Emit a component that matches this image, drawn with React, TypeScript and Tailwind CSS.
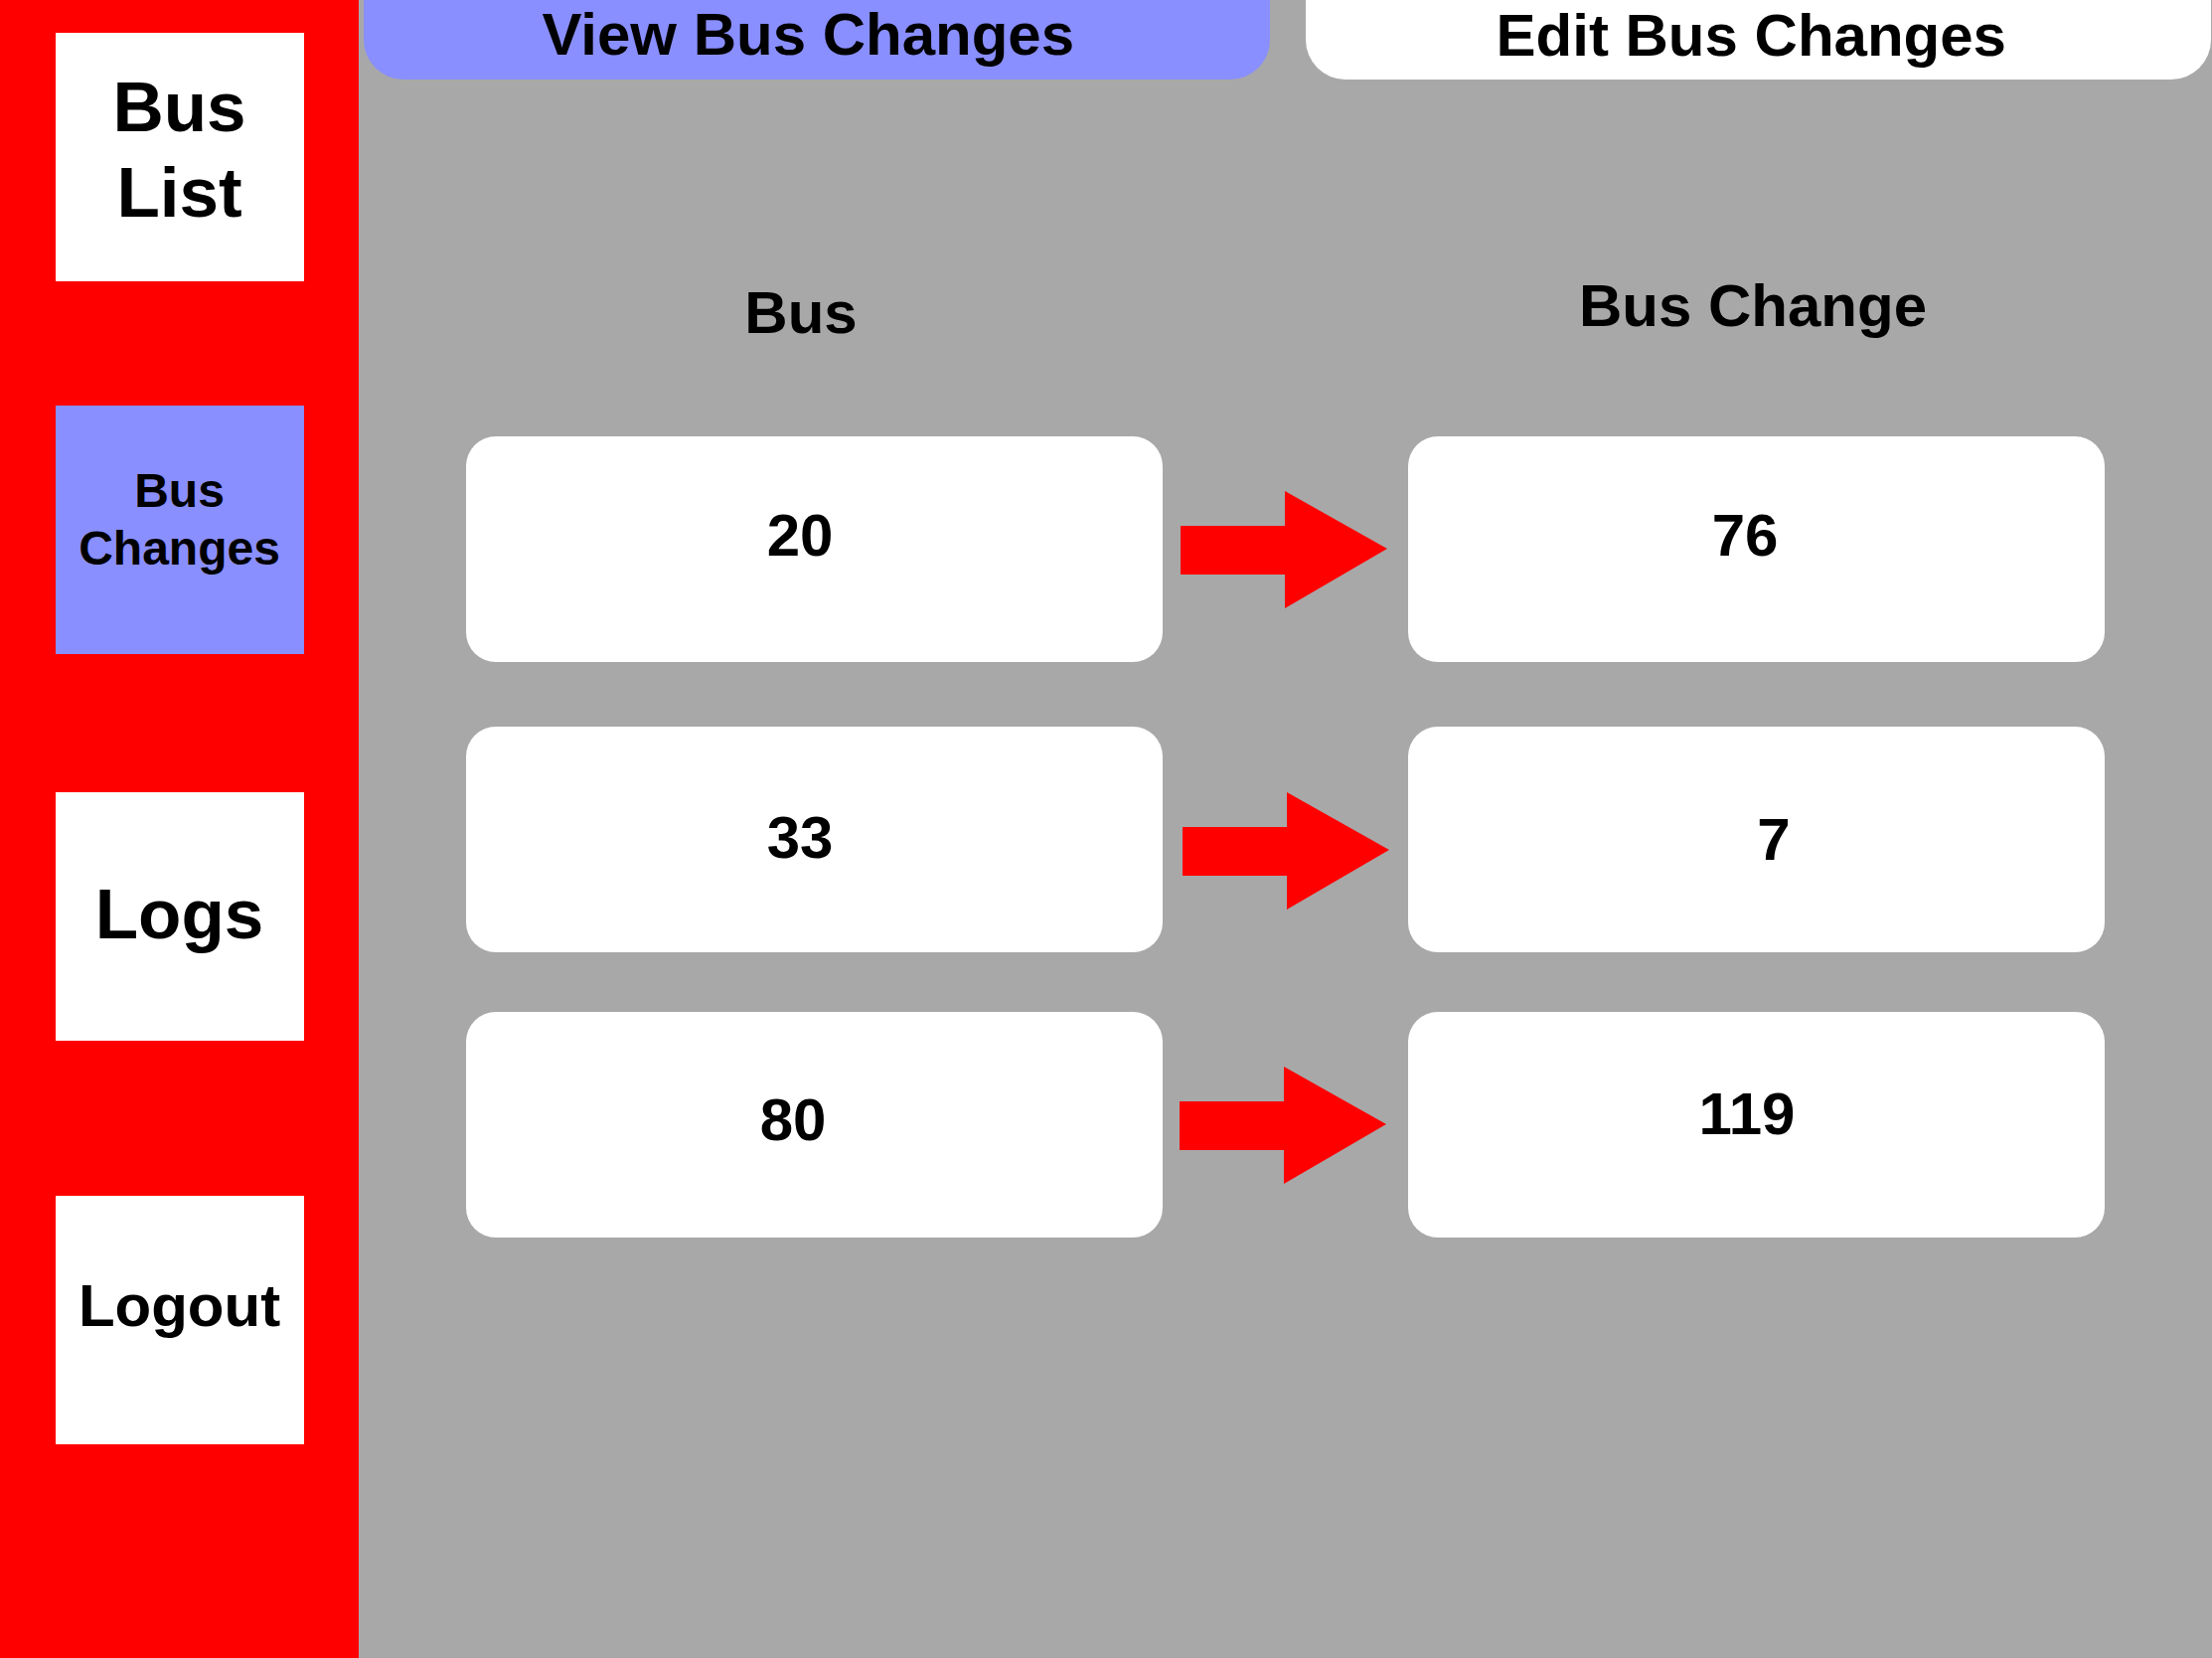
const font = { fontFamily: '"Liberation Sans", Arial, sans-serif' };

const navItems = [
  { label: ["Bus", "List"], box: "mt-[33px] bg-white", text: "text-[71px] leading-[86px] mb-[15px]" },
  { label: ["Bus", "Changes"], box: "mt-[125px] bg-[#8a8fff]", text: "text-[48px] leading-[58px] mb-[20px]" },
  { label: ["Logs"], box: "mt-[139px] bg-white", text: "text-[71px] leading-none mb-[6px]" },
  { label: ["Logout"], box: "mt-[156px] bg-white", text: "text-[60px] leading-none mb-[28px]" },
];

const rows = [
  {
    bus: "20",
    change: "76",
    row: "mt-0",
    busText: "mr-[29px] mb-[28px]",
    changeText: "mr-[23px] mb-[28px]",
    arrow: "pl-[18px]",
  },
  {
    bus: "33",
    change: "7",
    row: "mt-[65px]",
    busText: "mr-[29px] mb-[4px]",
    changeText: "ml-[35px]",
    arrow: "pl-[20px] mt-[22px]",
  },
  {
    bus: "80",
    change: "119",
    row: "mt-[60px]",
    busText: "mr-[43px] mb-[9px]",
    changeText: "mr-[19px] mb-[21px]",
    arrow: "pl-[17px]",
  },
];

const Arrow = () => (
  <svg width="208" height="118" viewBox="0 0 208 118" aria-hidden="true">
    <polygon points="0,35 105,35 105,0 208,58 105,118 105,84 0,84" fill="#ff0000" />
  </svg>
);

const Sidebar = () => (
  <aside className="flex h-full w-[361px] shrink-0 flex-col items-center bg-[#ff0000]">
    {navItems.map((item) => (
      <div
        key={item.label.join(" ")}
        className={`flex h-[250px] w-[250px] shrink-0 items-center justify-center ${item.box}`}
      >
        <div className={`text-center font-bold text-black ${item.text}`}>
          {item.label.map((line) => (
            <div key={line}>{line}</div>
          ))}
        </div>
      </div>
    ))}
  </aside>
);

const App = () => {
  return (
    <div className="flex h-[1668px] w-full overflow-hidden" style={font}>
      <Sidebar />

      <main className="flex flex-1 flex-col bg-[#a8a8a8]">
        <div className="flex gap-[36px] pl-[5px] pr-[1px]">
          <div className="flex h-[80px] flex-1 items-center justify-center rounded-b-[40px] bg-[#8a8fff]">
            <span className="mr-[17px] mb-[10px] text-[60px] leading-none font-bold text-black">
              View Bus Changes
            </span>
          </div>
          <div className="flex h-[80px] flex-1 items-center justify-center rounded-b-[40px] bg-white">
            <span className="mr-[14px] mb-[8px] text-[60px] leading-none font-bold text-black">
              Edit Bus Changes
            </span>
          </div>
        </div>

        <section className="mx-auto flex w-[1649px] flex-col">
          <div className="grid h-[359px] grid-cols-[701px_247px_701px]">
            <div className="flex justify-center pt-[205px]">
              <h2 className="mr-[27px] text-[60px] leading-[60px] font-bold text-black">Bus</h2>
            </div>
            <div />
            <div className="flex justify-center pt-[198px]">
              <h2 className="mr-[7px] text-[60px] leading-[60px] font-bold text-black">Bus Change</h2>
            </div>
          </div>

          {rows.map((r) => (
            <div key={r.bus} className={`grid h-[227px] grid-cols-[701px_247px_701px] ${r.row}`}>
              <div className="flex items-center justify-center rounded-[30px] bg-white">
                <span className={`text-[60px] leading-none font-bold text-black ${r.busText}`}>{r.bus}</span>
              </div>
              <div className={`flex items-center ${r.arrow}`}>
                <Arrow />
              </div>
              <div className="flex items-center justify-center rounded-[30px] bg-white">
                <span className={`text-[60px] leading-none font-bold text-black ${r.changeText}`}>
                  {r.change}
                </span>
              </div>
            </div>
          ))}
        </section>
      </main>
    </div>
  );
};

export default App;
